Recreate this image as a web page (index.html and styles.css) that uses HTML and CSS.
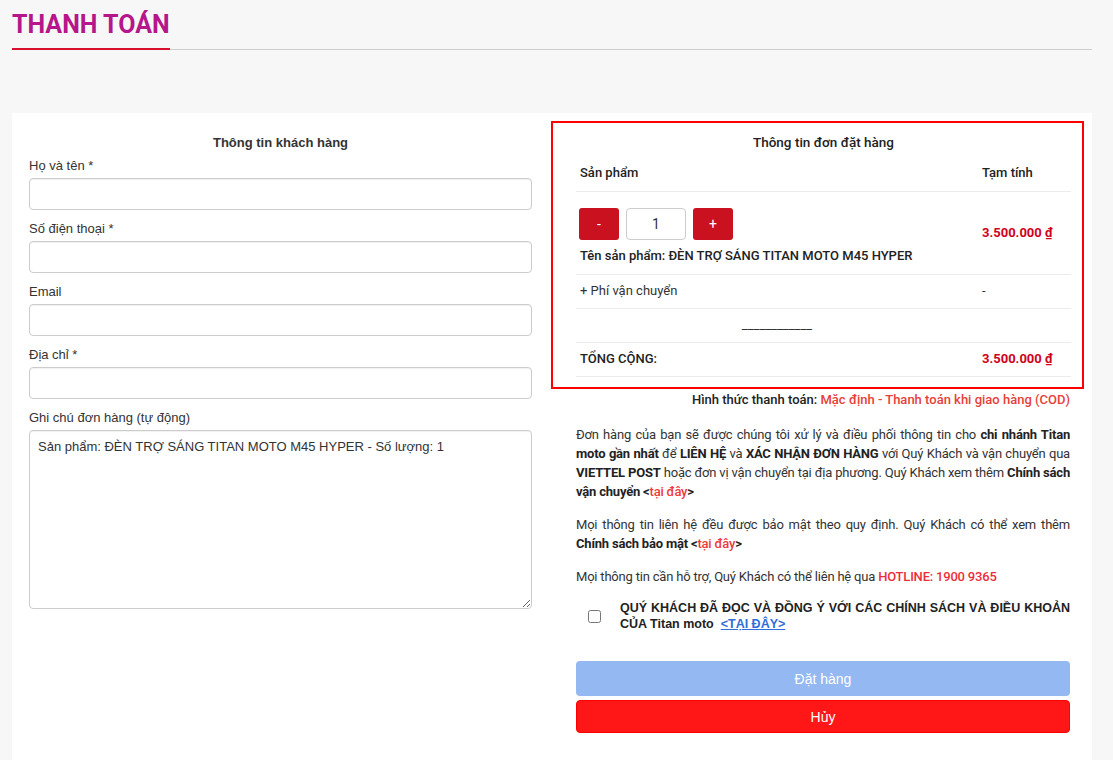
FILE: index.html
```
<!DOCTYPE html>
<html lang="vi">
<head>
<meta charset="utf-8">
<title>Thanh toán</title>
<link rel="stylesheet" href="styles.css">
</head>
<body>
<header class="page-head">
  <h1 class="page-title">THANH TOÁN</h1>
</header>
<main class="card">
  <section class="customer">
    <h2 class="col-title">Thông tin khách hàng</h2>
    <label class="field-label">Họ và tên *</label>
    <input class="field" type="text">
    <label class="field-label">Số điện thoại *</label>
    <input class="field" type="text">
    <label class="field-label">Email</label>
    <input class="field" type="text">
    <label class="field-label">Địa chỉ *</label>
    <input class="field" type="text">
    <label class="field-label">Ghi chú đơn hàng (tự động)</label>
    <textarea class="field note">Sản phẩm: ĐÈN TRỢ SÁNG TITAN MOTO M45 HYPER - Số lượng: 1</textarea>
  </section>
  <section class="order-col">
    <div class="order-box">
      <h2 class="order-title">Thông tin đơn đặt hàng</h2>
      <table class="order-table">
        <tr class="row-head">
          <th class="c-prod">Sản phẩm</th>
          <th class="c-price">Tạm tính</th>
        </tr>
        <tr class="row-item">
          <td class="c-prod">
            <div class="qty">
              <button class="qty-btn">-</button>
              <input class="qty-input" type="text" value="1">
              <button class="qty-btn">+</button>
            </div>
            <div class="prod-name">Tên sản phẩm: ĐÈN TRỢ SÁNG TITAN MOTO M45 HYPER</div>
          </td>
          <td class="c-price price item-price">3.500.000 ₫</td>
        </tr>
        <tr class="row-plain">
          <td class="c-prod">+ Phí vận chuyển</td>
          <td class="c-price">-</td>
        </tr>
        <tr class="row-plain">
          <td class="c-prod center">____________</td>
          <td class="c-price"></td>
        </tr>
        <tr class="row-plain row-total">
          <td class="c-prod">TỔNG CỘNG:</td>
          <td class="c-price price">3.500.000 ₫</td>
        </tr>
      </table>
    </div>
    <div class="below">
      <p class="pay">Hình thức thanh toán: <span class="pay-red">Mặc định - Thanh toán khi giao hàng (COD)</span></p>
      <p class="info">Đơn hàng của bạn sẽ được chúng tôi xử lý và điều phối thông tin cho <b>chi nhánh Titan</b> <b>moto gần nhất</b> để <b>LIÊN HỆ</b> và <b>XÁC NHẬN ĐƠN HÀNG</b> với Quý Khách và vận chuyển qua <b>VIETTEL POST</b> hoặc đơn vị vận chuyển tại địa phương. Quý Khách xem thêm <b>Chính sách</b> <b>vận chuyển &lt;<span class="red-link">tại đây</span>&gt;</b></p>
      <p class="info">Mọi thông tin liên hệ đều được bảo mật theo quy định. Quý Khách có thể xem thêm <b>Chính sách bảo mật &lt;<span class="red-link">tại đây</span>&gt;</b></p>
      <p class="info">Mọi thông tin cần hỗ trợ, Quý Khách có thể liên hệ qua <span class="hotline">HOTLINE: 1900 9365</span></p>
      <label class="agree">
        <input class="agree-box" type="checkbox">
        <span class="agree-text">QUÝ KHÁCH ĐÃ ĐỌC VÀ ĐỒNG Ý VỚI CÁC CHÍNH SÁCH VÀ ĐIỀU KHOẢN CỦA Titan moto &nbsp;<a class="blue-link" href="#">&lt;TẠI ĐÂY&gt;</a></span>
      </label>
      <button class="btn btn-order">Đặt hàng</button>
      <button class="btn btn-cancel">Hủy</button>
    </div>
  </section>
</main>
</body>
</html>
```

FILE: styles.css
```
* { box-sizing: border-box; }

body {
  margin: 0;
  background: #f7f7f7;
  font-family: "Liberation Sans", Arial, sans-serif;
  color: #333;
}

.page-head {
  margin: 10px 21px 0 12px;
  border-bottom: 1px solid #cfcfcf;
}

.page-title {
  display: inline-block;
  margin: 0 0 -1px 0;
  padding: 0 0 8px 0;
  font-family: Roboto, "Liberation Sans", sans-serif;
  font-weight: 700;
  font-size: 25px;
  line-height: 30px;
  color: #b5178b;
  border-bottom: 2px solid #d70f2c;
}

.card {
  margin: 63px 21px 0 12px;
  background: #fff;
  padding: 8px 8px 60px 17px;
  display: grid;
  grid-template-columns: 503px 1fr;
  column-gap: 19px;
  align-items: start;
}

/* left column */
.customer {
  display: flex;
  flex-direction: column;
  padding-top: 12px;
}

.col-title {
  margin: 0 0 3px;
  font-size: 13px;
  font-weight: 700;
  line-height: 20px;
  text-align: center;
  color: #333;
}

.field-label {
  display: block;
  font-size: 13px;
  line-height: 20px;
  margin-bottom: 2px;
  color: #333;
}

.field {
  display: block;
  width: 100%;
  height: 32px;
  margin: 0 0 9px;
  border: 1px solid #ccc;
  border-radius: 4px;
  background: #fff;
  box-shadow: inset 0 1px 1px rgba(0,0,0,.06);
  font-family: "Liberation Sans", Arial, sans-serif;
  font-size: 13px;
  color: #333;
}

.note {
  height: 179px;
  padding: 6px 8px;
  line-height: 20px;
  resize: vertical;
}

/* right column */
.order-box {
  border: 2px solid #ff0000;
  padding: 9px 11px 10px 23px;
  font-family: Roboto, "Liberation Sans", sans-serif;
  color: #333;
}

.order-title {
  margin: 0 0 3px;
  font-size: 13.5px;
  font-weight: 500;
  line-height: 20px;
  text-align: center;
  color: #222;
}

.order-table {
  width: 100%;
  border-collapse: collapse;
  font-size: 13px;
}

.order-table th,
.order-table td {
  padding: 6px 4px 7px;
  line-height: 20px;
  text-align: left;
  vertical-align: middle;
  border-bottom: 1px solid #ececec;
}

.order-table th {
  font-weight: 500;
  padding: 8px 4px;
  color: #222;
}

.c-price { width: 93px; }

.row-item td { padding: 16px 4px 8px; }

.row-item td.item-price { padding: 12px 4px; }

.center { text-align: center !important; }

.qty {
  display: flex;
  gap: 7px;
  margin-bottom: 6px;
  margin-left: -1px;
}

.qty-btn {
  width: 40px;
  height: 32px;
  border: 0;
  border-radius: 3px;
  background: #c9111f;
  color: #fff;
  font-family: Roboto, "Liberation Sans", sans-serif;
  font-size: 14px;
  padding: 0;
}

.qty-input {
  width: 60px;
  height: 32px;
  border: 1px solid #ccc;
  border-radius: 4px;
  text-align: center;
  font-family: Roboto, "Liberation Sans", sans-serif;
  font-size: 14px;
  color: #333;
  padding: 0;
}

.prod-name {
  font-weight: 500;
  color: #222;
}

.price {
  font-weight: 700;
  color: #d0021b;
}

.row-total .c-prod {
  font-weight: 500;
  color: #222;
}

.below {
  padding: 0 14px 0 25px;
  font-family: Roboto, "Liberation Sans", sans-serif;
  font-size: 13px;
  color: #333;
}

.pay {
  margin: 1px 0 0;
  line-height: 20px;
  text-align: right;
  font-weight: 500;
  color: #222;
}

.pay-red { color: #e8403a; }

.info {
  margin: 15px 0 0;
  line-height: 19px;
  text-align: justify;
  letter-spacing: -0.2px;
}

.info + .info { margin-top: 14px; }

.info b { font-weight: 700; color: #222; }

.red-link { color: #ee3b3b; font-weight: 500; }

.hotline { color: #ee2d3a; font-weight: 500; }

.agree {
  display: flex;
  align-items: center;
  margin-top: 14px;
}

.agree-box {
  width: 13px;
  height: 13px;
  margin: 0 19px 0 12px;
  flex: none;
}

.agree-text {
  font-family: "Liberation Sans", Arial, sans-serif;
  font-weight: 700;
  font-size: 12.5px;
  line-height: 16px;
  text-align: justify;
  color: #222;
}

.blue-link {
  color: #2f6ed8;
  text-decoration: underline;
}

.btn {
  display: block;
  width: 100%;
  border-radius: 4px;
  color: #fff;
  font-family: "Liberation Sans", Arial, sans-serif;
  font-size: 14px;
  padding: 0;
}

.btn-order {
  margin-top: 29px;
  height: 35px;
  border: 0;
  background: #94b8f1;
}

.btn-cancel {
  margin-top: 4px;
  height: 33px;
  border: 1px solid #ff0000;
  background: #ff1616;
}
```
